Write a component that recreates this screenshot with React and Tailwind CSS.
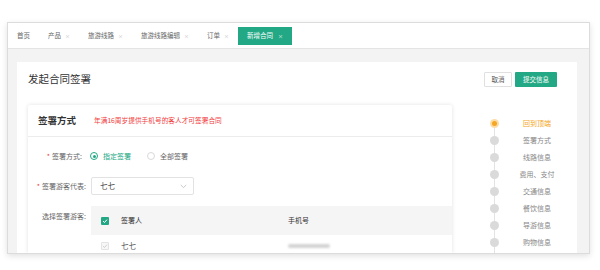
const green = "bg-[#22a884]";

const tabs = ["首页", "产品", "旅游线路", "旅游线路编辑", "订单"];
const steps = ["签署方式", "线路信息", "费用、支付", "交通信息", "餐饮信息", "导游信息", "购物信息"];

function Radio({ checked, label }) {
    return (
        <div className="flex items-center">
            {checked ? (
                <span className="w-[8px] h-[8px] rounded-full border-[1.5px] border-[#22a884] flex items-center justify-center">
                    <span className="w-[3px] h-[3px] rounded-full bg-[#22a884]" />
                </span>
            ) : (
                <span className="w-[8px] h-[8px] rounded-full border border-[#d9d9d9] bg-white" />
            )}
            <span className={`ml-[5px] text-[7px] ${checked ? "text-[#22a884]" : "text-[#666]"}`}>{label}</span>
        </div>
    );
}

function Check({ on }) {
    return on ? (
        <span className={`w-[8px] h-[8px] rounded-[1px] ${green} flex items-center justify-center`}>
            <svg width="6" height="6" viewBox="0 0 6 6">
                <path d="M1 3.1 L2.5 4.5 L5 1.6" stroke="white" strokeWidth="1" fill="none" />
            </svg>
        </span>
    ) : (
        <span className="w-[8px] h-[8px] rounded-[1px] border border-[#e3e3e3] bg-[#f7f7f7] flex items-center justify-center">
            <svg width="6" height="6" viewBox="0 0 6 6">
                <path d="M1 3.1 L2.5 4.5 L5 1.6" stroke="#d0d0d0" strokeWidth="1" fill="none" />
            </svg>
        </span>
    );
}

export default function App() {
    return (
        <div
            className="w-[600px] h-[270px] bg-white pt-[22px] pl-[7px]"
            style={{ fontFamily: '"Noto Sans CJK SC", "Noto Sans", sans-serif' }}
        >
            <div className="w-[583px] h-[232px] border border-[#dcdcdc] flex flex-col overflow-hidden shadow-[0_2px_6px_rgba(0,0,0,0.12)]">
                {/* tab bar */}
                <div className="h-[26px] shrink-0 bg-white border-b border-[#e4e4e4] flex items-center">
                    {tabs.map((t, i) => (
                        <div key={t} className="px-[9px] flex items-center text-[6.5px] text-[#666] leading-none">
                            <span>{t}</span>
                            {i > 0 && <span className="ml-[4px] text-[5px] text-[#bbb]">×</span>}
                        </div>
                    ))}
                    <div className={`h-[18px] px-[9px] flex items-center ${green} text-white text-[6.5px] leading-none`}>
                        <span>新增合同</span>
                        <span className="ml-[5px] text-[5px]">×</span>
                    </div>
                </div>

                {/* body */}
                <div className="flex-1 min-h-0 bg-[#f3f3f3] pt-[13px] pl-[9px] pr-[12px]">
                    <div className="h-full bg-white flex flex-col">
                        <div className="h-[43px] shrink-0 pt-[10px] pl-[11px] pr-[20px]">
                            <div className="h-[15px] flex items-center justify-between">
                                <span className="text-[10.5px] text-[#333] leading-none">发起合同签署</span>
                                <div className="flex gap-[3px]">
                                    <button className="w-[28px] h-[15px] border border-[#e0e0e0] bg-white text-[6.5px] text-[#555] rounded-[1px]">
                                        取消
                                    </button>
                                    <button className={`w-[42px] h-[15px] ${green} text-white text-[6.5px] rounded-[1px]`}>
                                        提交信息
                                    </button>
                                </div>
                            </div>
                        </div>

                        <div className="flex-1 min-h-0 flex">
                            {/* form card */}
                            <div className="ml-[11px] w-[424px] bg-white rounded-t-[2px] shadow-[0_0_4px_rgba(0,0,0,0.12)] flex flex-col">
                                <div className="h-[32px] shrink-0 border-b border-[#ececec] flex items-center pl-[10px]">
                                    <span className="text-[9.5px] font-bold text-[#333]">签署方式</span>
                                    <span className="ml-[18px] text-[6.7px] text-[#f03c3c]">年满16周岁提供手机号的客人才可签署合同</span>
                                </div>

                                <div className="pl-[10px] pt-[10px] flex flex-col">
                                    <div className="h-[18px] flex items-center">
                                        <div className="w-[44px] flex justify-end text-[7px] text-[#666] whitespace-nowrap">
                                            <span className="text-[#f03c3c] mr-[2px]">*</span>签署方式:
                                        </div>
                                        <div className="ml-[8px] flex items-center gap-[16px]">
                                            <Radio checked label="指定签署" />
                                            <Radio label="全部签署" />
                                        </div>
                                    </div>

                                    <div className="mt-[12px] h-[18px] flex items-center">
                                        <div className="w-[48px] flex justify-end text-[7px] text-[#666] whitespace-nowrap">
                                            <span className="text-[#f03c3c] mr-[2px]">*</span>签署游客代表:
                                        </div>
                                        <div className="ml-[5px] w-[103px] h-[18px] border border-[#e2e2e2] rounded-[2px] flex items-center justify-between pl-[8px] pr-[6px]">
                                            <span className="text-[7.5px] text-[#444]">七七</span>
                                            <svg width="7" height="5" viewBox="0 0 7 5">
                                                <path d="M0.8 1 L3.5 3.6 L6.2 1" stroke="#bbb" strokeWidth="0.8" fill="none" />
                                            </svg>
                                        </div>
                                    </div>

                                    <div className="mt-[11px] flex items-start">
                                        <div className="w-[48px] pt-[6px] flex justify-end text-[7px] text-[#666] whitespace-nowrap leading-[8px]">
                                            选择签署游客:
                                        </div>
                                        <div className="ml-[5px] flex-1 flex flex-col">
                                            <div className="h-[29px] bg-[#f5f5f5] flex items-center">
                                                <div className="w-[197px] flex items-center pl-[10px]">
                                                    <Check on />
                                                    <span className="ml-[12px] text-[7px] text-[#333]">签署人</span>
                                                </div>
                                                <span className="text-[7px] text-[#333]">手机号</span>
                                            </div>
                                            <div className="h-[22px] flex items-center border-b border-[#f0f0f0]">
                                                <div className="w-[197px] flex items-center pl-[10px]">
                                                    <Check />
                                                    <span className="ml-[12px] text-[7.5px] text-[#555]">七七</span>
                                                </div>
                                                <span className="w-[42px] h-[4px] rounded-full bg-[#d4d4d4] blur-[1px]" />
                                            </div>
                                        </div>
                                    </div>
                                </div>
                            </div>

                            {/* step nav */}
                            <div className="flex-1 relative pt-[10px]">
                                <div className="absolute left-[42px] top-[18px] bottom-0 w-px bg-[#e3e3e3]" />
                                <div className="relative h-[17px] flex items-center">
                                    <span className="ml-[38px] w-[9px] h-[9px] rounded-full bg-[#fddca6] flex items-center justify-center">
                                        <span className="w-[5px] h-[5px] rounded-full bg-[#f5a623]" />
                                    </span>
                                    <span className="ml-[18px] w-[40px] text-center text-[7px] text-[#f5a623]">回到顶端</span>
                                </div>
                                {steps.map((s) => (
                                    <div key={s} className="relative h-[17px] flex items-center">
                                        <span className="ml-[38px] w-[9px] h-[9px] rounded-full bg-[#dadada]" />
                                        <span className="ml-[18px] w-[40px] text-center text-[7px] text-[#888] whitespace-nowrap">{s}</span>
                                    </div>
                                ))}
                            </div>
                        </div>
                    </div>
                </div>
            </div>
        </div>
    );
}
